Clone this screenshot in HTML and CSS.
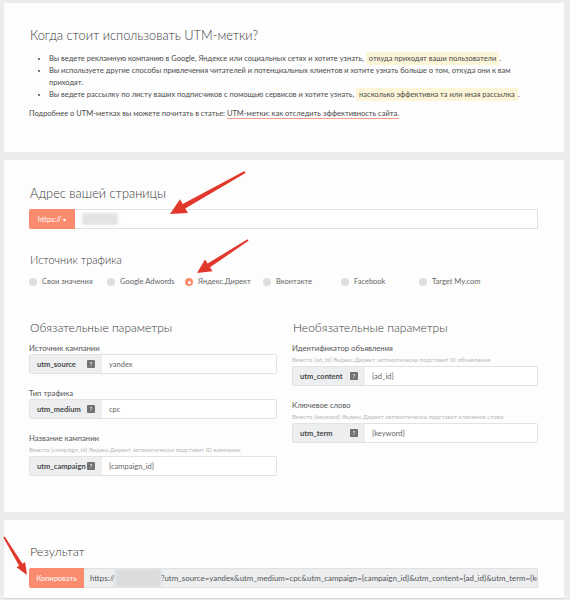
FILE: index.html
```html
<!DOCTYPE html>
<html lang="ru">
<head>
    <meta charset="UTF-8">
    <meta name="viewport" content="width=device-width, initial-scale=1.0">
    <title>UTM-метки</title>
    <link rel="stylesheet" href="styles.css">
</head>
<body>

    <div class="page">
        <div class="card card-info">
            <h1>Когда стоит использовать UTM-метки?</h1>
            <ul class="reasons">
                <li>Вы ведете рекламную компанию в Google, Яндексе или социальных сетях и хотите узнать, <span class="mark">откуда приходят ваши пользователи</span>.</li>
                <li>Вы используете другие способы привлечения читателей и потенциальных клиентов и хотите узнать больше о том, откуда они к вам приходят.</li>
                <li>Вы ведете рассылку по листу ваших подписчиков с помощью сервисов и хотите узнать, <span class="mark">насколько эффективна та или иная рассылка</span>.</li>
            </ul>
            <p class="more">Подробнее о UTM-метках вы можете почитать в статье: <a href="#">UTM-метки: как отследить эффективность сайта.</a></p>
        </div>

        <div class="card card-form">
            <h2>Адрес вашей страницы</h2>
            <div class="url-group">
                <button class="proto">https:// <span class="caret">&#9662;</span></button>
                <div class="url-input"><span class="blur blur-url"></span></div>
            </div>

            <h3 class="source-title">Источник трафика</h3>
            <div class="sources">
                <label class="source"><span class="radio"></span>Свои значения</label>
                <label class="source"><span class="radio"></span>Google Adwords</label>
                <label class="source"><span class="radio checked"></span>Яндекс.Директ</label>
                <label class="source"><span class="radio"></span>Вконтакте</label>
                <label class="source"><span class="radio"></span>Facebook</label>
                <label class="source"><span class="radio"></span>Target My.com</label>
            </div>

            <div class="params">
                <div class="param-col">
                    <h3>Обязательные параметры</h3>
                    <div class="field">
                        <div class="field-label">Источник кампании</div>
                        <div class="input-group">
                            <div class="addon">utm_source <span class="help">?</span></div>
                            <div class="value">yandex</div>
                        </div>
                    </div>
                    <div class="field">
                        <div class="field-label">Тип трафика</div>
                        <div class="input-group">
                            <div class="addon">utm_medium <span class="help">?</span></div>
                            <div class="value">cpc</div>
                        </div>
                    </div>
                    <div class="field">
                        <div class="field-label">Название кампании</div>
                        <div class="hint">Вместо {campaign_id} Яндекс.Директ автоматически подставит ID кампании</div>
                        <div class="input-group">
                            <div class="addon">utm_campaign<span class="help">?</span></div>
                            <div class="value">{campaign_id}</div>
                        </div>
                    </div>
                </div>
                <div class="param-col">
                    <h3>Необязательные параметры</h3>
                    <div class="field">
                        <div class="field-label">Идентификатор объявления</div>
                        <div class="hint">Вместо {ad_id} Яндекс.Директ автоматически подставит ID объявления</div>
                        <div class="input-group">
                            <div class="addon">utm_content <span class="help">?</span></div>
                            <div class="value">{ad_id}</div>
                        </div>
                    </div>
                    <div class="field">
                        <div class="field-label">Ключевое слово</div>
                        <div class="hint">Вместо {keyword} Яндекс.Директ автоматически подставит ключевое слово</div>
                        <div class="input-group">
                            <div class="addon">utm_term <span class="help">?</span></div>
                            <div class="value">{keyword}</div>
                        </div>
                    </div>
                </div>
            </div>
        </div>

        <div class="card card-result">
            <h2>Результат</h2>
            <div class="result-group">
                <button class="copy">Копировать</button>
                <div class="result">https://<span class="blur blur-result"></span>?utm_source=yandex&amp;utm_medium=cpc&amp;utm_campaign={campaign_id}&amp;utm_content={ad_id}&amp;utm_term={keyword}</div>
            </div>
        </div>
    </div>

    <!-- red pointers drawn over the screenshot -->
    <svg class="arrows" width="570" height="600" viewBox="0 0 570 600">
        <polygon points="244.5,171.1 182.7,204.0 180.0,199.3 170,214 188.0,213.0 185.2,208.4 245.5,172.9"/>
        <polygon points="247.5,239.2 207.6,263.6 205.0,259.5 197,273 212.5,271.2 210.0,267.3 248.5,240.8"/>
        <polygon points="3.3,537.4 19.1,565.8 16.5,567.3 27,575 25.1,562.1 22.5,563.7 4.7,536.6"/>
    </svg>

</body>
</html>
```

FILE: styles.css
```css
body {
    margin: 0;
    background-color: #ececec;
    font-family: Lato, "Open Sans", sans-serif;
    color: #444;
}

.page {
    padding: 3px 6px 0 4px;
}

.card {
    background-color: #fdfdfd;
    margin-bottom: 8px;
    padding: 0 26px 0 25px;
}

h1, h2, h3 {
    font-weight: 300;
    color: #3a3a3a;
    margin: 0;
}

/* first card */
.card-info {
    height: 149px;
    padding-top: 22px;
    box-sizing: border-box;
}

.card-info h1 {
    font-size: 12.8px;
    line-height: 20px;
    padding-left: 1px;
}

.reasons {
    margin: 8px 0 0;
    padding-left: 20px;
    font-size: 7.5px;
    line-height: 12px;
    color: #4a4a4a;
}

.mark {
    background-color: #fdf5d8;
    padding: 2px 3px;
}

.more {
    margin: 7px 0 0;
    font-size: 7.5px;
    line-height: 12px;
    color: #4a4a4a;
}

.more a {
    color: #4a4a4a;
    text-decoration: none;
    border-bottom: 1px solid #f59f8b;
}

/* second card */
.card-form {
    padding-top: 24px;
    padding-bottom: 36px;
}

.card-form h2 {
    font-size: 12.8px;
    line-height: 18px;
    padding-left: 1px;
}

.url-group {
    display: flex;
    height: 20px;
    margin-top: 7px;
}

.proto {
    width: 46px;
    border: none;
    border-radius: 2px 0 0 2px;
    background-color: #fa8b6e;
    color: #fff;
    font-family: inherit;
    font-size: 7.5px;
    padding: 0;
}

.caret {
    font-size: 6px;
}

.url-input {
    flex: 1;
    border: 1px solid #e2e2e2;
    border-left: none;
    background-color: #fff;
    display: flex;
    align-items: center;
    padding-left: 7px;
}

.blur {
    display: inline-block;
    flex-shrink: 0;
    background-color: #e3e3e3;
    filter: blur(1.5px);
}

.blur-url {
    width: 36px;
    height: 12px;
}

.card-form h3 {
    font-size: 12px;
    line-height: 16px;
    padding-left: 1px;
}

.card-form .source-title {
    font-size: 11px;
    margin-top: 23px;
}

.sources {
    display: flex;
    margin-top: 8px;
}

.source {
    width: 78px;
    display: flex;
    align-items: center;
    font-size: 7.5px;
    line-height: 12px;
    color: #666;
}

.radio {
    width: 8px;
    height: 8px;
    border-radius: 50%;
    background-color: #dedede;
    margin-right: 5px;
    display: flex;
    align-items: center;
    justify-content: center;
}

.radio.checked {
    background-color: #fa8b6e;
}

.radio.checked::after {
    content: "";
    width: 3px;
    height: 3px;
    border-radius: 50%;
    background-color: #fff;
}

.params {
    display: grid;
    grid-template-columns: 248px 246px;
    column-gap: 15px;
    margin-top: 32px;
}

.params h3 {
    margin-bottom: 6px;
}

.field {
    margin-bottom: 13px;
}

.field:last-child {
    margin-bottom: 0;
}

.field-label {
    font-size: 7.7px;
    line-height: 12px;
    color: #555;
}

.hint {
    font-size: 6px;
    line-height: 10px;
    margin: 1px 0;
    color: #b8b8b8;
    white-space: nowrap;
}

.input-group {
    display: flex;
    height: 20px;
    border: 1px solid #e2e2e2;
    border-radius: 2px;
    box-sizing: border-box;
    background-color: #fff;
}

.addon {
    width: 72px;
    display: flex;
    align-items: center;
    justify-content: space-between;
    padding: 0 7px 0 7px;
    box-sizing: border-box;
    background-color: #eceef0;
    font-size: 7.5px;
    font-weight: 700;
    color: #484848;
}

.help {
    width: 8px;
    height: 8px;
    border-radius: 1px;
    background-color: #727272;
    color: #fff;
    font-size: 5px;
    display: flex;
    align-items: center;
    justify-content: center;
}

.value {
    display: flex;
    align-items: center;
    padding-left: 7px;
    font-size: 7.5px;
    color: #666;
}

/* third card */
.card-result {
    height: 79px;
    padding-top: 23px;
    box-sizing: border-box;
    margin-bottom: 0;
    border-bottom: 1px solid #d8d8d8;
}

.card-result h2 {
    font-size: 12.5px;
    line-height: 18px;
    padding-left: 1px;
}

.result-group {
    display: flex;
    height: 20px;
    margin-top: 7px;
}

.copy {
    width: 55px;
    flex-shrink: 0;
    border: none;
    border-radius: 2px 0 0 2px;
    background-color: #fa8b6e;
    color: #fff;
    font-family: inherit;
    font-size: 7.5px;
    padding: 0;
}

.result {
    flex: 1;
    min-width: 0;
    background-color: #eceef0;
    border: 1px solid #e2e2e2;
    border-left: none;
    padding: 0 5px 0 6px;
    font-size: 7.9px;
    line-height: 18px;
    color: #555;
    white-space: nowrap;
    overflow: hidden;
}

.blur-result {
    width: 46px;
    height: 18px;
    vertical-align: top;
    background-color: #dadcde;
}

.arrows {
    position: absolute;
    top: 0;
    left: 0;
    pointer-events: none;
}

.arrows polygon {
    fill: #e2382c;
}
```
